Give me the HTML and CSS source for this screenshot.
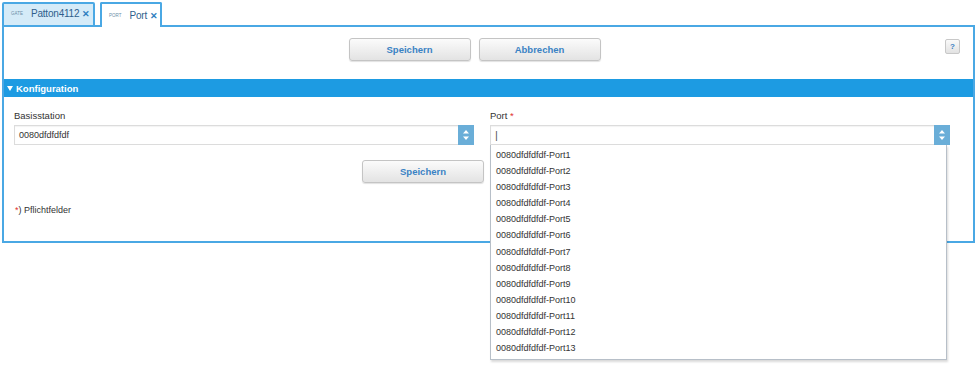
FILE: index.html
```html
<!DOCTYPE html>
<html>
<head>
<meta charset="utf-8">
<link rel="stylesheet" href="styles.css">
</head>
<body>
<div class="page">
<div class="tabs">
  <div class="tab tab-inactive"><span class="tab-kind">GATE</span><span class="tab-title">Patton4112</span><span class="tab-close">✕</span></div>
  <div class="tab tab-active"><span class="tab-kind">PORT</span><span class="tab-title">Port</span><span class="tab-close">✕</span></div>
</div>
<div class="panel">
  <div class="toolbar">
    <div class="toolbar-buttons">
      <button class="btn">Speichern</button>
      <button class="btn">Abbrechen</button>
    </div>
    <button class="help">?</button>
  </div>
  <div class="section-head"><span class="tri"></span>Konfiguration</div>
  <div class="form">
    <div class="fields">
      <div class="field">
        <label class="label">Basisstation</label>
        <div class="combo"><span class="combo-text">0080dfdfdfdf</span><span class="spin"><svg width="8" height="12" viewBox="0 0 8 12"><path d="M4 1 L7 4.5 H1 Z M4 11 L7 7.5 H1 Z" fill="#fff"/></svg></span></div>
      </div>
      <div class="field field-port">
        <label class="label">Port <span class="req">*</span></label>
        <div class="combo"><span class="combo-text caret">|</span><span class="spin"><svg width="8" height="12" viewBox="0 0 8 12"><path d="M4 1 L7 4.5 H1 Z M4 11 L7 7.5 H1 Z" fill="#fff"/></svg></span></div>
        <ul class="dropdown">
          <li>0080dfdfdfdf-Port1</li>
          <li>0080dfdfdfdf-Port2</li>
          <li>0080dfdfdfdf-Port3</li>
          <li>0080dfdfdfdf-Port4</li>
          <li>0080dfdfdfdf-Port5</li>
          <li>0080dfdfdfdf-Port6</li>
          <li>0080dfdfdfdf-Port7</li>
          <li>0080dfdfdfdf-Port8</li>
          <li>0080dfdfdfdf-Port9</li>
          <li>0080dfdfdfdf-Port10</li>
          <li>0080dfdfdfdf-Port11</li>
          <li>0080dfdfdfdf-Port12</li>
          <li>0080dfdfdfdf-Port13</li>
        </ul>
      </div>
    </div>
    <div class="form-actions"><button class="btn">Speichern</button></div>
    <div class="note"><span class="req">*</span>) Pflichtfelder</div>
  </div>
</div>
</div>
</body>
</html>
```
FILE: styles.css
```css
* { box-sizing: border-box; }
html, body {
  min-height: 379px;
}
body {
  margin: 0;
  background: #fff;
  font-family: "Liberation Sans", Arial, sans-serif;
  font-size: 10px;
  color: #333;
}
.page {
  min-height: 379px;
}
.tabs {
  display: flex;
  align-items: flex-start;
  gap: 5px;
  padding: 2px 0 0 2px;
  height: 25px;
}
.tab {
  display: flex;
  align-items: center;
  height: 25px;
  border: 2px solid #4aa8e4;
  border-radius: 2px 2px 0 0;
  padding: 0 6px 2px 7px;
  position: relative;
  z-index: 2;
}
.tab-inactive {
  background: #d5ebf8;
  width: 93px;
}
.tab-active {
  background: #fff;
  border-bottom: none;
  width: 62px;
  padding-bottom: 0;
}
.tab-kind {
  font-size: 4.5px;
  color: #6c8fa8;
  margin-right: 8px;
}
.tab-title {
  font-size: 10px;
  color: #2f5f8c;
  letter-spacing: -0.2px;
}
.tab-close {
  font-size: 9px;
  font-weight: bold;
  color: #2f7ec0;
  margin-left: 3px;
}
.panel {
  margin: 0 2px;
  border: 2px solid #4aa8e4;
  height: 218px;
  position: relative;
}
.toolbar {
  display: flex;
  align-items: flex-start;
  padding: 11px 13px 0 0;
  height: 52px;
}
.toolbar-buttons {
  flex: 1;
  display: flex;
  justify-content: center;
  gap: 8px;
}
.btn {
  width: 122px;
  height: 23px;
  border: 1px solid #c4c4c4;
  border-radius: 3px;
  background: linear-gradient(#fbfbfb, #e3e3e3);
  box-shadow: 0 1px 1px rgba(0,0,0,0.12);
  font-family: "Liberation Sans", Arial, sans-serif;
  font-size: 9.5px;
  font-weight: bold;
  color: #3a82c4;
  padding: 0;
}
.help {
  width: 15px;
  height: 15px;
  border: 1px solid #c8c8c8;
  border-radius: 2px;
  background: linear-gradient(#fafafa, #e2e2e2);
  font-family: "Liberation Sans", Arial, sans-serif;
  font-size: 8px;
  font-weight: bold;
  color: #3a82c4;
  padding: 0;
  margin-top: 1px;
}
.section-head {
  height: 18px;
  background: #1d9be2;
  color: #fff;
  font-weight: bold;
  font-size: 9.5px;
  display: flex;
  align-items: center;
  padding-left: 3px;
}
.tri {
  width: 0;
  height: 0;
  border-left: 3.5px solid transparent;
  border-right: 3.5px solid transparent;
  border-top: 5px solid #fff;
  margin-right: 3px;
}
.form {
  padding: 10px 23px 0 10px;
}
.fields {
  display: flex;
  gap: 16px;
}
.field {
  flex: 1;
  display: flex;
  flex-direction: column;
  position: relative;
}
.label {
  font-size: 9.5px;
  color: #333;
  height: 18px;
  line-height: 18px;
}
.req { color: #e03030; }
.combo {
  height: 20px;
  border: 1px solid #dcdcdc;
  border-right: none;
  display: flex;
  align-items: center;
  background: #fff;
  box-shadow: inset 0 1px 1px rgba(0,0,0,0.05);
}
.combo-text {
  flex: 1;
  padding-left: 4px;
  font-size: 9px;
  color: #333;
}
.caret { font-size: 11px; color: #555; }
.spin {
  width: 16px;
  height: 20px;
  background: #6aaed8;
  display: flex;
  align-items: center;
  justify-content: center;
}
.dropdown {
  position: absolute;
  top: 38px;
  left: 0;
  width: 457px;
  margin: 0;
  padding: 2px 0 3px;
  list-style: none;
  background: #fff;
  border: 1px solid #b7bfc8;
  border-top: none;
  box-shadow: 1px 2px 2px rgba(0,0,0,0.15);
  z-index: 5;
}
.dropdown li {
  height: 16.1px;
  line-height: 16px;
  padding-left: 5px;
  font-size: 9px;
  color: #333;
}
.form-actions {
  display: flex;
  padding: 15px 0 0 348px;
}
.note {
  margin-top: 22px;
  font-size: 9px;
  color: #333;
  padding-left: 1px;
}
```
